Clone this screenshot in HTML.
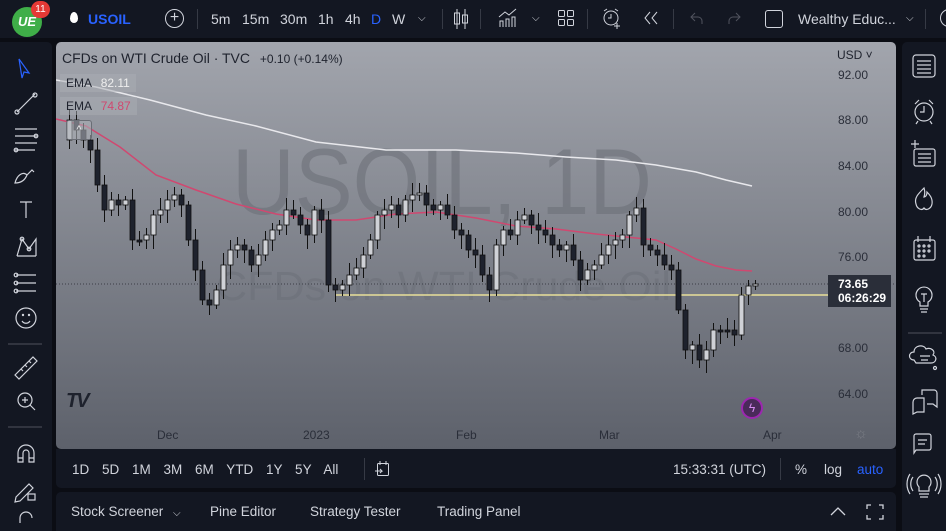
<!DOCTYPE html>
<html><head><meta charset="utf-8"><style>
*{margin:0;padding:0;box-sizing:border-box}
body{width:946px;height:531px;background:#0b0d14;font-family:"Liberation Sans",sans-serif;color:#d1d4dc;position:relative;overflow:hidden}
.top{position:absolute;left:0;top:0;width:946px;height:38px;background:#131722}
.t{position:absolute;font-size:14px;color:#d1d4dc;top:11px}
.side{position:absolute;background:#131722}
.chart{position:absolute;left:56px;top:42px;width:840px;height:407px;border-radius:5px;background:linear-gradient(#a2a5ad,#5d616b);overflow:hidden}
.pl{position:absolute;left:782px;font-size:12px;color:#2a2e39}
.dl{position:absolute;top:386px;font-size:12px;color:#2a2e39}
.bar{position:absolute;left:56px;width:840px;background:#131722}
.b{position:absolute;font-size:13.5px;color:#d1d4dc}
svg.i{position:absolute}
</style></head><body>
<div class="top"></div>
<div style="position:absolute;left:12px;top:7px;width:30px;height:30px;border-radius:50%;background:#3fae48;color:#fff;font-weight:bold;font-size:13px;text-align:center;line-height:30px;font-style:italic">UE</div>
<div style="position:absolute;left:31px;top:1px;width:19px;height:17px;border-radius:9px;background:#e53935;color:#fff;font-size:10px;text-align:center;line-height:17px">11</div>
<div style="position:absolute;left:70px;top:12px;width:8px;height:11px;background:#fff;border-radius:50% 50% 50% 50%/60% 60% 40% 40%"></div>
<div class="t" style="left:88px;color:#2962ff;font-weight:bold">USOIL</div>
<div style="position:absolute;left:165px;top:9px;width:19px;height:19px;border:1.5px solid #d1d4dc;border-radius:50%;text-align:center;line-height:15px;font-size:16px">+</div>
<div style="position:absolute;left:197px;top:9px;width:1px;height:20px;background:#363a45"></div>
<div class="t" style="left:211px">5m</div><div class="t" style="left:242px">15m</div><div class="t" style="left:280px">30m</div><div class="t" style="left:318px">1h</div><div class="t" style="left:345px">4h</div><div class="t" style="left:371px;color:#2962ff">D</div><div class="t" style="left:392px">W</div><div class="t" style="left:418px;font-size:10px;top:13px">⌵</div>
<div style="position:absolute;left:442px;top:9px;width:1px;height:20px;background:#363a45"></div>
<svg class="i" style="left:452px;top:8px" width="18" height="22" fill="none" stroke="#d1d4dc"><path d="M5 1v20M13 1v20"/><rect x="2.5" y="5" width="5" height="11"/><rect x="10.5" y="7" width="5" height="8"/></svg>
<div style="position:absolute;left:480px;top:9px;width:1px;height:20px;background:#363a45"></div>
<svg class="i" style="left:498px;top:8px" width="20" height="20" fill="none" stroke="#d1d4dc"><path d="M1 9l6-5 4 3 7-6M2 19V13h3v6M8 19V11h3v8M14 19V9h3v10"/></svg>
<div class="t" style="left:532px;font-size:10px;top:13px">⌵</div>
<svg class="i" style="left:557px;top:9px" width="18" height="18" fill="none" stroke="#d1d4dc"><rect x="1.5" y="1.5" width="6" height="6" rx="1"/><rect x="10.5" y="1.5" width="6" height="6" rx="1"/><rect x="1.5" y="10.5" width="6" height="6" rx="1"/><rect x="10.5" y="10.5" width="6" height="6" rx="1"/></svg>
<div style="position:absolute;left:587px;top:9px;width:1px;height:20px;background:#363a45"></div>
<svg class="i" style="left:601px;top:7px" width="22" height="22" fill="none" stroke="#d1d4dc"><circle cx="10" cy="11" r="7"/><path d="M10 7v4h-3M3 4l3-2M17 4l-3-2M16 16v6M13 19h6"/></svg>
<svg class="i" style="left:643px;top:11px" width="16" height="14" fill="none" stroke="#d1d4dc"><path d="M7 1L2 7l5 6M14 1L9 7l5 6"/></svg>
<div style="position:absolute;left:673px;top:9px;width:1px;height:20px;background:#363a45"></div>
<svg class="i" style="left:690px;top:11px" width="14" height="14" fill="none" stroke="#50535e"><path d="M5 2L1 6l4 4M1 6h7a4 4 0 0 1 4 4v3"/></svg>
<svg class="i" style="left:727px;top:11px" width="14" height="14" fill="none" stroke="#50535e"><path d="M9 2l4 4-4 4M13 6H6a4 4 0 0 0-4 4v3"/></svg>
<div style="position:absolute;left:765px;top:10px;width:18px;height:18px;border:1.5px solid #d1d4dc;border-radius:3px"></div>
<div class="t" style="left:798px">Wealthy Educ...</div>
<div class="t" style="left:906px;font-size:10px;top:13px">⌵</div>
<div style="position:absolute;left:925px;top:9px;width:1px;height:20px;background:#363a45"></div>
<div style="position:absolute;left:940px;top:9px;width:18px;height:18px;border:1.5px solid #d1d4dc;border-radius:50%"></div>

<div class="side" style="left:0;top:42px;width:52px;height:489px;border-radius:0 5px 0 0"></div>
<div class="side" style="left:902px;top:42px;width:44px;height:489px;border-radius:5px 0 0 0"></div>
<svg class="i" style="left:0;top:42px" width="52" height="489" fill="none" stroke="#d1d4dc" stroke-width="1.2">
<path d="M19 17l10 14-5-1-2 6z" stroke="#2962ff"/>
<path d="M17 70l18-18"/><circle cx="17" cy="70" r="2"/><circle cx="35" cy="53" r="2"/>
<path d="M15 87h22M15 94h22M15 101h22M15 108h20"/><circle cx="36" cy="94" r="1.8"/><circle cx="16" cy="108" r="1.8"/>
<path d="M15 141c2-8 8-12 12-8-2 5-6 8-12 8zM27 133l5-5 2 2"/>
<path d="M20 160h12M26 160v16"/>
<path d="M17 214l5-17 7 10 7-10 0 17M17 214l19 0"/><circle cx="22" cy="197" r="1.8"/><circle cx="29" cy="207" r="1.8"/>
<path d="M16 233h20M16 241h20M16 249h20"/><circle cx="16" cy="233" r="1.8"/><circle cx="16" cy="241" r="1.8"/><circle cx="16" cy="249" r="1.8"/>
<circle cx="26" cy="276" r="10"/><circle cx="23" cy="273" r=".6"/><circle cx="29" cy="273" r=".6"/><path d="M22 279c2 3 6 3 8 0"/>
<path d="M8 302h34" stroke="#434651"/>
<path d="M15 333l18-18 4 4-18 18zM21 327l2 2M25 323l2 2M29 319l2 2"/>
<circle cx="25" cy="358" r="7"/><path d="M25 355v6M22 358h6M30 363l5 5"/>
<path d="M8 385h34" stroke="#434651"/>
<path d="M18 420v-9a8 8 0 0 1 16 0v9h-5v-9a3 3 0 0 0-6 0v9zM18 416h5M29 416h5"/>
<path d="M16 455l13-13 4 4-13 13-5 1z"/><rect x="28" y="452" width="7" height="6"/>
<path d="M20 481v-5a6 6 0 0 1 12 0"/>
</svg>
<svg class="i" style="left:902px;top:42px" width="44" height="489" fill="none" stroke="#d1d4dc" stroke-width="1.2">
<rect x="11" y="13" width="22" height="22" rx="3"/><path d="M15 19h14M15 23h14M15 27h14M15 31h14"/>
<circle cx="22" cy="70" r="9"/><path d="M22 64v6h-4M13 62l4-4M31 62l-4-4M16 79l-2 3M28 79l2 3"/>
<rect x="12" y="107" width="21" height="17" rx="2"/><path d="M16 112h13M16 116h13M16 120h13M13 98v8M9 102h8"/>
<path d="M22 146c-6 6-10 10-8 16 1 5 6 7 8 4 2 3 7 1 8-4 1-6-3-10-5-12 0 4-2 5-3 5 1-3 1-6 0-9z"/>
<rect x="12" y="198" width="21" height="20" rx="2"/><path d="M16 194v6M28 194v6"/><circle cx="17" cy="204" r="1"/><circle cx="22" cy="204" r="1"/><circle cx="27" cy="204" r="1"/><circle cx="17" cy="209" r="1"/><circle cx="22" cy="209" r="1"/><circle cx="27" cy="209" r="1"/><circle cx="17" cy="214" r="1"/><circle cx="22" cy="214" r="1"/>
<path d="M18 264v-4a8 8 0 1 1 8 0v4zM18 267h8M19 270h6M19 252h6M22 252v8"/>
<path d="M6 291h34" stroke="#434651"/>
<path d="M12 318c-6 0-6-8 0-8 0-7 10-8 12-3 5-2 10 2 7 6 5 2 3 8-2 8H14zM18 314h10M19 318h7"/><circle cx="33" cy="326" r="1.5"/>
<path d="M11 372v-12a4 4 0 0 1 4-4h7v14h-7zM20 353v-5h12a3 3 0 0 1 3 3v14l-4-3h-6"/>
<path d="M12 411v-17a2 2 0 0 1 2-2h13a2 2 0 0 1 2 2v12a2 2 0 0 1-2 2h-13zM16 398h9M16 402h7"/>
<path d="M17 449v-4a7 7 0 1 1 10 0v4zM17 452h10M18 455h8M11 435c-3 4-3 10 0 14M8 432c-4 6-4 14 0 20M33 435c3 4 3 10 0 14M36 432c4 6 4 14 0 20"/>
</svg>

<div class="chart">
<svg id="c" width="840" height="407" style="position:absolute;left:0;top:0">
<text x="176" y="172" font-size="94" fill="#6c6f78" fill-opacity=".6" font-family="Liberation Sans" textLength="420" lengthAdjust="spacingAndGlyphs">USOIL, 1D</text>
<text x="160" y="258" font-size="41" fill="#6c6f78" fill-opacity=".55" font-family="Liberation Sans" textLength="455" lengthAdjust="spacingAndGlyphs">CFDs on WTI Crude Oil</text>
<polyline fill="none" stroke="#e8e8ec" stroke-width="1.5" points="0,38 40,45 94,58 150,73 200,84 260,100 330,108 400,108 460,111 510,115 560,118 600,123 640,130 670,138 696,144"/>
<polyline fill="none" stroke="#d04870" stroke-width="1.5" points="0,77 30,84 64,105 100,133 140,148 180,162 220,172 260,178 300,178 340,172 380,170 420,176 460,184 500,187 540,192 570,195 600,198 620,207 640,217 660,224 680,228 696,229"/>
<line x1="0" y1="242" x2="840" y2="242" stroke="#3a3d45" stroke-dasharray="1 2"/>
<line x1="280" y1="253" x2="780" y2="253" stroke="#e8e09a" stroke-width="1.5"/>
<g id="cd"></g>
</svg>
<div style="position:absolute;left:6px;top:8px;font-size:14px;color:#1e222d">CFDs on WTI Crude Oil · TVC <span style="font-size:12px;margin-left:6px">+0.10 (+0.14%)</span></div>
<div style="position:absolute;left:4px;top:32px;padding:2px 6px;background:rgba(170,173,180,.5);font-size:12px;color:#1e222d">EMA <span style="color:#eee;margin-left:6px">82.11</span></div>
<div style="position:absolute;left:4px;top:55px;padding:2px 6px;background:rgba(170,173,180,.5);font-size:12px;color:#1e222d">EMA <span style="color:#d04870;margin-left:6px">74.87</span></div>
<div style="position:absolute;left:10px;top:78px;width:26px;height:20px;border:1px solid #6a6d75;border-radius:3px;background:rgba(170,173,180,.6);color:#eee;text-align:center;font-size:11px;line-height:18px">^</div>
<div style="position:absolute;left:781px;top:6px;font-size:12px;color:#1e222d">USD ˅</div>
<div class="pl" style="top:26px">92.00</div><div class="pl" style="top:71px">88.00</div><div class="pl" style="top:117px">84.00</div><div class="pl" style="top:163px">80.00</div><div class="pl" style="top:208px">76.00</div><div class="pl" style="top:299px">68.00</div><div class="pl" style="top:345px">64.00</div>
<div style="position:absolute;left:772px;top:233px;width:63px;height:32px;background:#2a2e39;color:#fff;font-size:12px;font-weight:bold;padding:2px 10px;line-height:14px">73.65<br>06:26:29</div>
<div style="position:absolute;left:10px;top:348px;font-size:20px;font-weight:bold;color:#1e222d;font-style:italic;letter-spacing:-2px">TV</div>
<div style="position:absolute;left:685px;top:355px;width:22px;height:22px;border-radius:50%;background:#4a2a5a;border:2px solid #9c27b0;color:#d68cf0;font-size:12px;text-align:center;line-height:18px">ϟ</div>
<div class="dl" style="left:101px">Dec</div><div class="dl" style="left:247px">2023</div><div class="dl" style="left:400px">Feb</div><div class="dl" style="left:543px">Mar</div><div class="dl" style="left:707px">Apr</div>
<div style="position:absolute;left:798px;top:383px;font-size:15px;color:#7a7d85">☼</div>
</div>

<div class="bar" style="top:449px;height:39px;border-radius:0 0 5px 5px"></div>
<div class="b" style="left:72px;top:462px;word-spacing:9px">1D 5D 1M 3M 6M YTD 1Y 5Y All</div>
<div style="position:absolute;left:364px;top:458px;width:1px;height:22px;background:#363a45"></div>
<svg class="i" style="left:374px;top:460px" width="16" height="18" fill="none" stroke="#d1d4dc"><rect x="3.5" y="3.5" width="11" height="12" rx="1"/><path d="M6 1v4M12 1v4M1 11h7l-2-2M8 11l-2 2"/></svg>
<div class="b" style="left:673px;top:462px">15:33:31 (UTC)</div>
<div style="position:absolute;left:780px;top:458px;width:1px;height:22px;background:#363a45"></div>
<div class="b" style="left:795px;top:462px">%</div><div class="b" style="left:824px;top:462px">log</div><div class="b" style="left:857px;top:462px;color:#2962ff">auto</div>
<div class="bar" style="top:492px;height:39px;border-radius:5px 5px 0 0"></div>
<div class="b" style="left:71px;top:504px">Stock Screener <span style="font-size:10px;margin-left:6px">⌵</span></div>
<div class="b" style="left:210px;top:504px">Pine Editor</div><div class="b" style="left:310px;top:504px">Strategy Tester</div><div class="b" style="left:437px;top:504px">Trading Panel</div>
<svg class="i" style="left:830px;top:503px" width="54" height="18" fill="none" stroke="#d1d4dc" stroke-width="1.3"><path d="M1 12l7-7 7 7M37 6V2h4M49 2h4v4M53 12v4h-4M41 16h-4v-4"/></svg>
<script>
var ys=[140,120,130,140,150,185,210,200,205,200,240,240,235,215,210,200,195,205,240,270,300,305,290,265,250,245,250,265,255,240,230,225,210,215,225,235,210,220,285,290,285,275,268,255,240,215,210,205,215,200,195,193,205,210,205,215,230,235,250,255,275,290,245,230,235,220,215,225,230,235,245,250,245,260,280,270,265,255,245,240,235,215,208,245,250,255,265,270,310,350,345,360,350,330,330,330,335,295,286,284];
var g=document.getElementById('cd'),h='',off=42;
for(var i=1;i<ys.length;i++){var x=4+i*7,o=ys[i-1]-off,c=ys[i]-off;if(Math.abs(o-c)<2)c=o+2;var t=Math.min(o,c),b=Math.max(o,c),up=c<o;
var hi=t-4-(i*7%9),lo=b+4+(i*5%11);
h+='<line x1="'+(x+2.5)+'" x2="'+(x+2.5)+'" y1="'+hi+'" y2="'+lo+'" stroke="#111"/>';
h+='<rect x="'+x+'" y="'+t+'" width="5" height="'+(b-t)+'" fill="'+(up?'#cfd1d6':'#1e222d')+'" stroke="#111" stroke-width="0.8"/>';}
g.innerHTML=h;
</script>
</body></html>
